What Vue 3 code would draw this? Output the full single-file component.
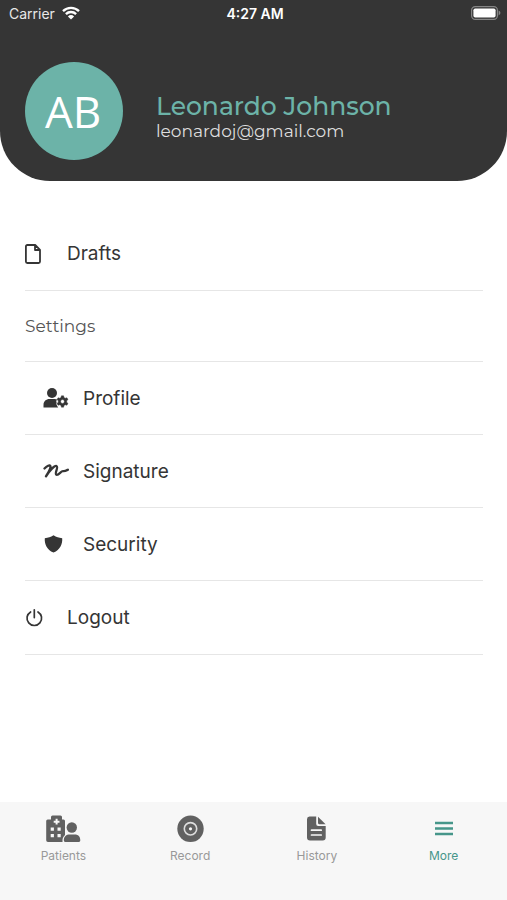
<script setup>
const tabs = [
  { id: 'patients', label: 'Patients' },
  { id: 'record', label: 'Record' },
  { id: 'history', label: 'History' },
  { id: 'more', label: 'More' },
]
const active = 'more'
const settings = [
  { id: 'profile', label: 'Profile' },
  { id: 'signature', label: 'Signature' },
  { id: 'security', label: 'Security' },
]
</script>

<template>
  <div class="screen">
    <header class="hero">
      <div class="status">
        <div class="carrier">
          <span>Carrier</span>
          <svg class="wifi" viewBox="0 0 18 14" aria-hidden="true">
            <path d="M1 5.1a11.600 11.600 0 0 1 16 0M3.900 8.100a7.400 7.400 0 0 1 10.200 0" fill="none" stroke="#fff" stroke-width="2.400" />
            <path d="M9 13.600 5.900 10.400a4.500 4.500 0 0 1 6.200 0z" fill="#fff" />
          </svg>
        </div>
        <time class="clock">4:27 AM</time>
        <div class="power">
          <svg class="battery" viewBox="0 0 30 14" aria-hidden="true">
            <rect x=".6" y=".6" width="25.800" height="12.800" rx="3.600" fill="none" stroke="#858585" stroke-width="1.200" />
            <rect x="2.400" y="2.400" width="22.200" height="9.200" rx="1.800" fill="#fff" />
            <path d="M27.600 4.600c2.400 1 2.400 3.800 0 4.800z" fill="#858585" />
          </svg>
        </div>
      </div>
      <div class="user">
        <div class="avatar">AB</div>
        <div class="who">
          <h1>Leonardo Johnson</h1>
          <p>leonardoj@gmail.com</p>
        </div>
      </div>
    </header>

    <main class="menu">
      <button class="row" type="button">
        <svg class="icon" viewBox="0 0 18 22" aria-hidden="true">
          <path d="M2.300 2h7.900L15 6.800V18.600A1.400 1.400 0 0 1 13.600 20H2.300A1.400 1.400 0 0 1 .9 18.600V3.400A1.400 1.400 0 0 1 2.300 2zM10 2v5h5" fill="none" stroke="currentColor" stroke-width="1.800" stroke-linejoin="round" />
        </svg>
        <span>Drafts</span>
      </button>
      <h2 class="section">Settings</h2>
      <button v-for="item in settings" :key="item.id" class="row nested" type="button">
        <svg v-if="item.id === 'profile'" class="icon" viewBox="0 0 26 22" aria-hidden="true">
          <circle cx="9" cy="6" r="5" fill="currentColor" />
          <path d="M.5 20.500V18c0-3.600 2.600-5.900 6-5.900h5.200c1 0 1.700.2 2.400.5-.8 1.200-1 2.200-.5 3-.7 1.600.2 3 1.600 4.900z" fill="currentColor" />
          <path d="M18.400 8.800h2.200l.4 1.700 1.200.7 1.700-.5 1.100 1.900-1.300 1.200v1.400l1.300 1.200-1.100 1.900-1.700-.5-1.200.7-.4 1.700h-2.200l-.4-1.700-1.200-.7-1.700.5-1.100-1.900 1.300-1.200v-1.400L14 12.600l1.100-1.900 1.700.5 1.200-.7zM19.500 12.600a1.900 1.900 0 1 0 0 3.800 1.900 1.900 0 0 0 0-3.800z" fill="currentColor" stroke="currentColor" stroke-width=".4" fill-rule="evenodd" />
        </svg>
        <svg v-else-if="item.id === 'signature'" class="icon" viewBox="0 0 26 22" aria-hidden="true">
          <path d="M1.500 8.500C3.600 6.200 7.200 4.200 7.500 6.400c.3 2.400-2.600 6.500-4.500 9.900C6.200 11 11.500 5.200 13.500 6c2.400 1-2.400 7.700-.1 8.700 2.400.8 4.800-4.200 6.800-3.600 1.400.3 2.300-.2 4.700-1.400" fill="none" stroke="currentColor" stroke-width="2.300" stroke-linecap="round" stroke-linejoin="round" />
        </svg>
        <svg v-else class="icon" viewBox="0 0 26 22" aria-hidden="true">
          <path d="M10.500 2.300c2.900 2 5.300 2.600 8.700 2.900.4 5.800-1.900 11.300-8.700 14.400C3.700 16.500 1.400 11 1.800 5.200c3.400-.3 5.800-.9 8.700-2.900z" fill="currentColor" />
        </svg>
        <span>{{ item.label }}</span>
      </button>
      <button class="row" type="button">
        <svg class="icon" viewBox="0 0 18 22" aria-hidden="true">
          <path d="M5.600 4.900a7.300 7.300 0 1 0 7.400 0M9.300 2.800v7.800" fill="none" stroke="currentColor" stroke-width="1.700" stroke-linecap="round" />
        </svg>
        <span>Logout</span>
      </button>
    </main>

    <nav class="tabs" aria-label="Main">
      <button v-for="tab in tabs" :key="tab.id" class="tab" :class="{ active: tab.id === active }" type="button">
        <svg v-if="tab.id === 'patients'" class="glyph" viewBox="0 0 36 30" aria-hidden="true">
          <path d="M6 2a1.500 1.500 0 0 1 1.500-1.500h8A1.500 1.500 0 0 1 17 2v2.500h1.500A1.500 1.500 0 0 1 20 6v14c-1.600 1.600-2.600 3.400-2.500 5.300V27H3a1.800 1.800 0 0 1-1.800-1.800V6a1.500 1.500 0 0 1 1.500-1.500H6z" fill="currentColor" />
          <path d="M10.600 3.800h2v1.900h1.900v2h-1.900v1.900h-2V7.700H8.700v-2h1.900zM5.700 12.500h3.200v3.200H5.700zM12.500 12.500h3.200v3.200h-3.200zM5.700 19h3.200v3.200H5.700zM12.500 19h3.200v3.200h-3.200z" fill="#f7f7f7" />
          <circle cx="26.800" cy="12.500" r="5.200" fill="currentColor" />
          <path d="M18.800 25.200c0-3.700 2.600-5.700 5.700-5.700H30c3.100 0 5.300 2.100 5.300 5.700 0 1.200-.7 1.800-1.900 1.800H20.700c-1.200 0-1.900-.6-1.900-1.800z" fill="currentColor" />
        </svg>
        <svg v-else-if="tab.id === 'record'" class="glyph" viewBox="0 0 36 30" aria-hidden="true">
          <circle cx="18.500" cy="13.800" r="13.200" fill="currentColor" />
          <circle cx="18.500" cy="13.800" r="6.200" fill="none" stroke="#dedede" stroke-width="1.600" />
          <circle cx="18.500" cy="13.800" r="1.600" fill="#f7f7f7" />
        </svg>
        <svg v-else-if="tab.id === 'history'" class="glyph" viewBox="0 0 36 30" aria-hidden="true">
          <path d="M10.500 1.500h6.700V9a2 2 0 0 0 2 2h7.500v11.500a3 3 0 0 1-3 3H11a3 3 0 0 1-3-3V4.200a2.700 2.700 0 0 1 2.500-2.700z" fill="currentColor" />
          <path d="M19 1.700 26.600 9.200h-6.500A1.100 1.100 0 0 1 19 8.100z" fill="currentColor" />
          <path d="M12.500 15.200h9.700M12.500 20h9.700" stroke="#f7f7f7" stroke-width="1.700" stroke-linecap="round" />
        </svg>
        <svg v-else class="glyph" viewBox="0 0 36 30" aria-hidden="true">
          <path d="M9 8h18M9 13.500h18M9 19h18" stroke="currentColor" stroke-width="2.400" />
        </svg>
        <span>{{ tab.label }}</span>
      </button>
    </nav>
  </div>
</template>

<style>
body {
  margin: 0;
  background: #fff;
}
</style>

<style scoped>
.screen {
  display: flex;
  flex-direction: column;
  min-height: 100vh;
  font-family: Inter, "Liberation Sans", sans-serif;
  color: #353535;
  background: #fff;
}
.hero {
  padding-bottom: 21px;
  border-radius: 0 0 50px 50px;
  background: #353535;
  color: #fff;
}
.status {
  display: grid;
  grid-template-columns: 1fr auto 1fr;
  align-items: center;
  height: 26px;
  padding: 0 6px 0 9px;
  font-size: 14px;
}
.carrier {
  display: flex;
  align-items: center;
  gap: 7px;
  color: #e8e8e8;
}
.wifi {
  width: 18px;
  height: 14px;
}
.clock {
  font-weight: 600;
}
.power {
  display: flex;
  justify-content: flex-end;
}
.battery {
  width: 30px;
  height: 14px;
}
.user {
  display: flex;
  align-items: center;
  gap: 33px;
  padding: 36px 25px 0;
}
.avatar {
  display: flex;
  align-items: center;
  justify-content: center;
  flex: none;
  box-sizing: border-box;
  width: 98px;
  height: 98px;
  padding-right: 2px;
  border-radius: 50%;
  background: #6cb3a8;
  font-family: "Open Sans", "Noto Sans", sans-serif;
  font-size: 44px;
}
.who {
  padding-top: 12px;
  font-family: Montserrat, Inter, sans-serif;
}
.who h1 {
  margin: 0;
  font-size: 25px;
  line-height: 28px;
  font-weight: 500;
  color: #6cb3a8;
}
.who p {
  margin: 0;
  font-size: 17px;
  line-height: 22px;
  color: #dedede;
}
.menu {
  flex: 1;
  padding: 36px 24px 32px 25px;
}
.row {
  display: flex;
  align-items: center;
  gap: 24px;
  width: 100%;
  min-height: 74px;
  padding: 0;
  border: 0;
  border-bottom: 1px solid #e6e6e6;
  background: none;
  font: inherit;
  font-size: 19px;
  color: inherit;
  text-align: left;
}
.icon {
  flex: none;
  width: 18px;
  height: 22px;
}
.nested {
  gap: 14px;
  min-height: 73px;
  padding-left: 18px;
}
.nested .icon {
  width: 26px;
}
.section {
  display: flex;
  align-items: center;
  min-height: 70px;
  margin: 0;
  border-bottom: 1px solid #e6e6e6;
  font-family: Montserrat, Inter, sans-serif;
  font-size: 17px;
  font-weight: 400;
  color: #555;
}
.tabs {
  display: grid;
  grid-template-columns: repeat(4, 1fr);
  min-height: 98px;
  background: #f7f7f7;
}
.tab {
  display: flex;
  flex-direction: column;
  align-items: center;
  gap: 3px;
  padding: 13px 0 0;
  border: 0;
  background: none;
  font: inherit;
  font-size: 12px;
  line-height: 16px;
  color: #999;
}
.glyph {
  width: 36px;
  height: 30px;
  color: #616161;
}
.active,
.active .glyph {
  color: #46968a;
}
</style>
